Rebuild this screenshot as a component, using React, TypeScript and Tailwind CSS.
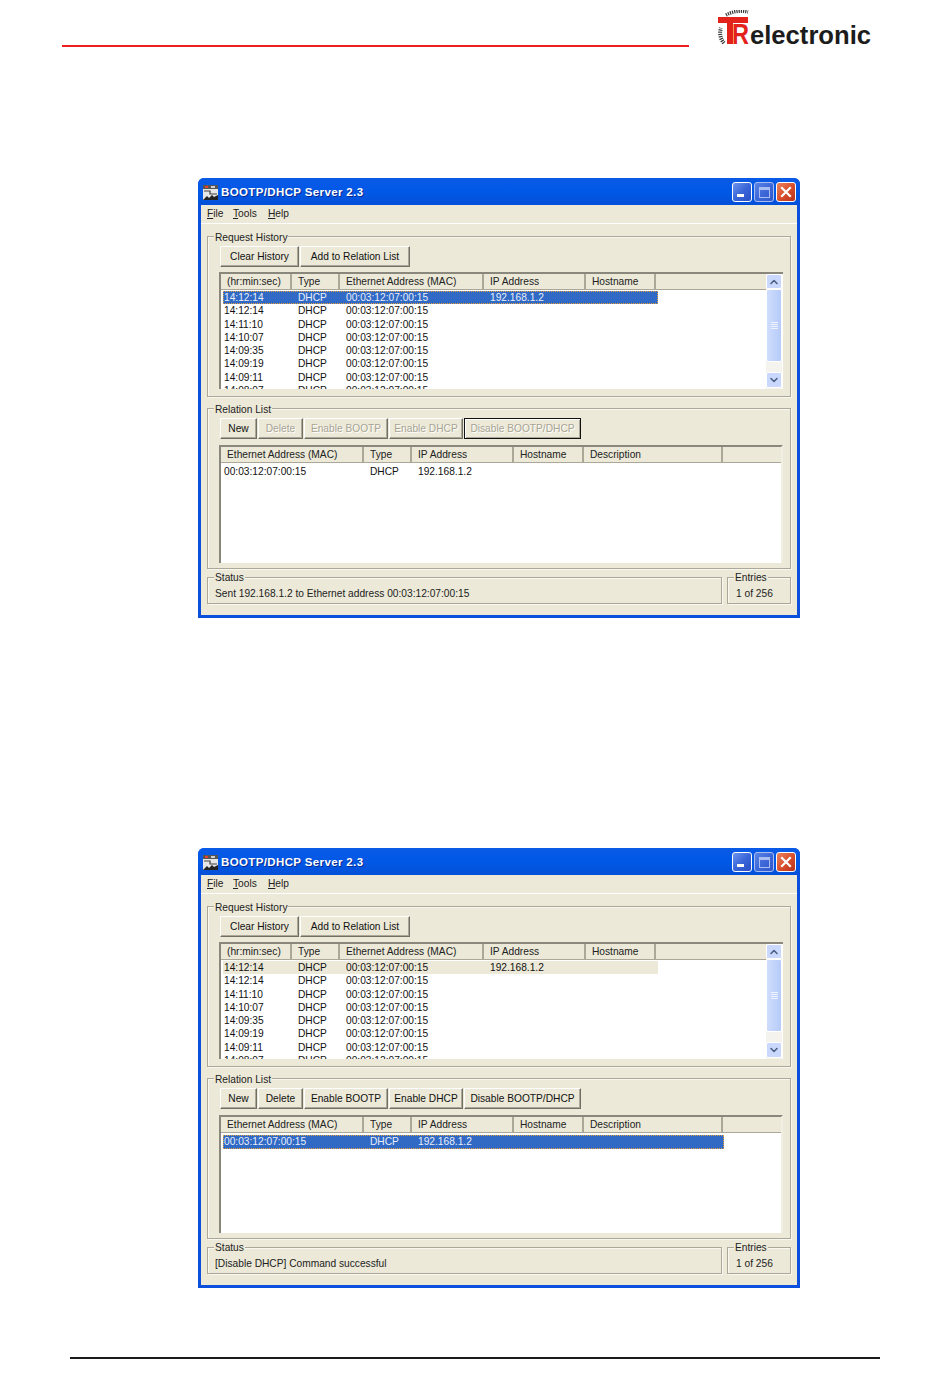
import { ChevronUp, ChevronDown } from "lucide-react";

const historyCols = [
  { label: "(hr:min:sec)", w: "w-[71px]" },
  { label: "Type", w: "w-[48px]" },
  { label: "Ethernet Address (MAC)", w: "w-[144px]" },
  { label: "IP Address", w: "w-[102px]" },
  { label: "Hostname", w: "w-[70px]" },
];

const relationCols = [
  { label: "Ethernet Address (MAC)", w: "w-[143px]" },
  { label: "Type", w: "w-[48px]" },
  { label: "IP Address", w: "w-[102px]" },
  { label: "Hostname", w: "w-[70px]" },
  { label: "Description", w: "w-[139px]" },
];

const times = ["14:12:14", "14:12:14", "14:11:10", "14:10:07", "14:09:35", "14:09:19", "14:09:11", "14:08:07"];

function TitleButton({ kind }: { kind: "min" | "max" | "close" }) {
  if (kind === "close") {
    return (
      <div className="w-[20px] h-[20px] rounded-[3px] border border-white bg-gradient-to-br from-[#e8825f] via-[#d9502c] to-[#b8321a] flex items-center justify-center">
        <svg width="12" height="12" viewBox="0 0 12 12">
          <path d="M2 2 L10 10 M10 2 L2 10" stroke="#fff" strokeWidth="2.2" strokeLinecap="square" />
        </svg>
      </div>
    );
  }
  if (kind === "min") {
    return (
      <div className="w-[20px] h-[20px] rounded-[3px] border border-white bg-gradient-to-br from-[#6f94ee] via-[#3a66d8] to-[#2a4fc4] flex items-end pl-[4px] pb-[4px]">
        <div className="w-[7px] h-[3px] bg-white" />
      </div>
    );
  }
  return (
    <div className="w-[20px] h-[20px] rounded-[3px] border border-[#a9bdf0] bg-gradient-to-br from-[#5b82e4] via-[#3d68d8] to-[#3058cc] flex items-center justify-center">
      <div className="w-[11px] h-[11px] border border-[#a9bdf0] border-t-[3px]" />
    </div>
  );
}

function AppIcon() {
  return (
    <svg width="15" height="15" viewBox="0 0 15 15" className="shrink-0">
      <rect x="0" y="0" width="15" height="15" fill="#e6e6e6" />
      <rect x="0" y="0" width="15" height="4" fill="#555" />
      <rect x="2" y="1" width="3" height="2" fill="#e04030" />
      <rect x="8" y="1" width="4" height="2" fill="#d0d0d0" />
      <path d="M1 6 H7 V9 H14" stroke="#404040" strokeWidth="1.2" fill="none" />
      <path d="M0 15 L4 11 L6 13 L9 10 L11 12 L15 10 V15 Z" fill="#222" />
    </svg>
  );
}

function Btn({ label, w, disabled, isDefault }: { label: string; w: string; disabled?: boolean; isDefault?: boolean }) {
  return (
    <div
      className={`${w} h-[21px] flex items-center justify-center bg-[#ece9d8] border ${
        isDefault
          ? "border-[#111] shadow-[inset_1px_1px_0_#fff,inset_-1px_-1px_0_#aca899]"
          : "border-t-white border-l-white border-r-[#716f64] border-b-[#716f64] shadow-[inset_-1px_-1px_0_#aca899]"
      } ${disabled ? "text-[#a7a493] [text-shadow:1px_1px_0_#fff]" : "text-[#111]"}`}
    >
      {label}
    </div>
  );
}

function Group({
  title,
  className,
  titleTop = "-top-[5px]",
  children,
}: {
  title: string;
  className: string;
  titleTop?: string;
  children: React.ReactNode;
}) {
  return (
    <div className={`relative border border-[#aca899] shadow-[1px_1px_0_#f8f7f0,inset_1px_1px_0_#f8f7f0] ${className}`}>
      <span className={`absolute left-[6px] ${titleTop} bg-[#ece9d8] pl-[1px] pr-[1px] leading-[12px] text-[#222]`}>{title}</span>
      {children}
    </div>
  );
}

function HeaderRow({ cols }: { cols: { label: string; w: string }[] }) {
  return (
    <div className="flex h-[16px] shrink-0 bg-[#ece9d8] shadow-[inset_0_-1px_0_#aca899]">
      {cols.map((c) => (
        <div
          key={c.label}
          className={`${c.w} shrink-0 pl-[6px] leading-[15px] text-[#222] border-r-2 border-r-[#aca899] whitespace-nowrap`}
        >
          {c.label}
        </div>
      ))}
      <div className="flex-1" />
    </div>
  );
}

function DataRow({
  cells,
  widths,
  state,
  rowClass,
}: {
  cells: string[];
  widths: string[];
  state?: "active" | "inactive";
  rowClass: string;
}) {
  const stateClass =
    state === "active"
      ? "bg-[#316ac5] text-[#e8eefa] border border-dotted border-[#e8a13c]"
      : state === "inactive"
        ? "bg-[#ece9d8] text-[#111] border border-transparent"
        : "text-[#111] border border-transparent";
  return (
    <div className={`flex ${rowClass} shrink-0 items-center ${stateClass}`}>
      {cells.map((c, i) => (
        <div key={i} className={`${widths[i]} shrink-0 whitespace-nowrap`}>
          {c}
        </div>
      ))}
    </div>
  );
}

function Scrollbar() {
  return (
    <div className="w-[16px] shrink-0 h-full bg-[#f4f3ee] flex flex-col mr-[1px]">
      <div className="h-[15px] shrink-0 rounded-[2px] bg-[#c9d8fc] border border-white flex items-center justify-center">
        <ChevronUp size={12} strokeWidth={3.2} color="#4d6185" />
      </div>
      <div className="h-[73px] shrink-0 rounded-[2px] bg-gradient-to-r from-[#cfdcfc] via-[#c3d4fb] to-[#b6cbf8] border border-white flex flex-col items-center justify-center gap-[1px]">
        <div className="w-[7px] h-[1px] bg-[#eef3fe]" />
        <div className="w-[7px] h-[1px] bg-[#eef3fe]" />
        <div className="w-[7px] h-[1px] bg-[#eef3fe]" />
        <div className="w-[7px] h-[1px] bg-[#eef3fe]" />
      </div>
      <div className="flex-1" />
      <div className="h-[16px] shrink-0 rounded-[2px] bg-[#c9d8fc] border border-white flex items-center justify-center mb-[1px]">
        <ChevronDown size={12} strokeWidth={3.2} color="#4d6185" />
      </div>
    </div>
  );
}

function XpWindow({
  firstRow,
  relationRow,
  disabled,
  status,
  className,
}: {
  firstRow: "active" | "inactive";
  relationRow?: "active";
  disabled: boolean;
  status: string;
  className: string;
}) {
  return (
    <div className={`w-[602px] h-[440px] shrink-0 ml-[198px] rounded-t-[6px] bg-[#0a50dc] flex flex-col text-[10.2px] ${className}`}>
      {/* Title bar */}
      <div className="h-[27px] shrink-0 rounded-t-[6px] bg-gradient-to-b from-[#0a5ae6] via-[#0058e6] to-[#0450d8] flex items-center pl-[5px] pr-[4px] pt-[1px]">
        <AppIcon />
        <span className="ml-[3px] mt-[2px] text-white font-bold text-[11.5px] tracking-[0.37px] [text-shadow:1px_1px_0_#0a2a90]">
          BOOTP/DHCP Server 2.3
        </span>
        <div className="ml-auto flex gap-[2px]">
          <TitleButton kind="min" />
          <TitleButton kind="max" />
          <TitleButton kind="close" />
        </div>
      </div>

      {/* Client area */}
      <div className="flex-1 mx-[3px] mb-[3px] bg-[#ece9d8] flex flex-col">
        <div className="h-[19px] shrink-0 border-b border-white flex items-center text-[#222] pl-[6px]">
          <span className="w-[26px]"><u>F</u>ile</span>
          <span className="w-[35px]"><u>T</u>ools</span>
          <span><u>H</u>elp</span>
        </div>

        <Group title="Request History" className="ml-[6px] mr-[6px] mt-[12px] h-[161px] shrink-0 pt-[9px] pl-[11px]">
          <div className="flex gap-[1px] ml-[1px]">
            <Btn label="Clear History" w="w-[79px]" />
            <Btn label="Add to Relation List" w="w-[110px]" />
          </div>
          <div className="mt-[5px] w-[564px] h-[117px] flex bg-white border-l-2 border-t-2 border-l-[#8a887c] border-t-[#8a887c] overflow-hidden">
            <div className="flex-1 flex flex-col overflow-hidden">
              <HeaderRow cols={historyCols} />
              <div className="pl-[2px] pt-[1px] w-[437px]">
                {times.map((t, i) => (
                  <DataRow
                    key={i}
                    cells={[t, "DHCP", "00:03:12:07:00:15", i === 0 ? "192.168.1.2" : ""]}
                    widths={["w-[74px]", "w-[48px]", "w-[144px]", "w-[100px]"]}
                    state={i === 0 ? firstRow : undefined}
                    rowClass="h-[13.3px]"
                  />
                ))}
              </div>
            </div>
            <Scrollbar />
          </div>
        </Group>

        <Group title="Relation List" className="ml-[6px] mr-[6px] mt-[11px] h-[161px] shrink-0 pt-[9px] pl-[11px]">
          <div className="flex gap-[1px] ml-[1px]">
            <Btn label="New" w="w-[37px]" />
            <Btn label="Delete" w="w-[45px]" disabled={disabled} />
            <Btn label="Enable BOOTP" w="w-[84px]" disabled={disabled} />
            <Btn label="Enable DHCP" w="w-[74px]" disabled={disabled} />
            <Btn label="Disable BOOTP/DHCP" w="w-[117px]" disabled={disabled} isDefault={disabled} />
          </div>
          <div className="mt-[6px] w-[564px] h-[118px] flex flex-col bg-white border-l-2 border-t-2 border-l-[#8a887c] border-t-[#8a887c] border-r-2 border-r-[#f1efe2] overflow-hidden">
            <HeaderRow cols={relationCols} />
            <div className="pl-[2px] pt-[2px] w-[503px]">
              <DataRow
                cells={["00:03:12:07:00:15", "DHCP", "192.168.1.2"]}
                widths={["w-[146px]", "w-[48px]", "w-[102px]"]}
                state={relationRow}
                rowClass="h-[14px]"
              />
            </div>
          </div>
        </Group>

        <div className="flex ml-[6px] mt-[8px] gap-[5px]">
          <Group title="Status" titleTop="-top-[6px]" className="w-[515px] h-[27px] pl-[7px] pt-[10px]">
            <div className="leading-[12px] text-[#222] whitespace-nowrap">{status}</div>
          </Group>
          <Group title="Entries" titleTop="-top-[6px]" className="w-[64px] h-[27px] pl-[8px] pt-[10px]">
            <div className="leading-[12px] text-[#222]">1 of 256</div>
          </Group>
        </div>
      </div>
    </div>
  );
}

function Logo() {
  const font = "'Liberation Sans', Arial, sans-serif";
  return (
    <svg width="156" height="36" viewBox="0 0 156 36" className="shrink-0">
      {/* encoder ring */}
      <path d="M6 33 A15 15 0 0 1 3 18" fill="none" stroke="#333" strokeWidth="4" strokeDasharray="1.2 1" />
      <path d="M8 5 A30 30 0 0 1 30 2" fill="none" stroke="#333" strokeWidth="3.5" strokeDasharray="1.2 1" />
      <rect x="0" y="7" width="30" height="6" fill="#e3231b" />
      <rect x="9" y="7" width="6" height="27" fill="#e3231b" />
      <text x="14" y="34" fontFamily={font} fontWeight="700" fontSize="30" fill="#e3231b" textLength="17" lengthAdjust="spacingAndGlyphs">
        R
      </text>
      <text x="32" y="34" fontFamily={font} fontWeight="700" fontSize="26" fill="#1c1c1c" textLength="121" lengthAdjust="spacingAndGlyphs">
        electronic
      </text>
    </svg>
  );
}

export default function App() {
  return (
    <div className="relative w-[950px] h-[1387px] bg-white flex flex-col overflow-hidden font-['Liberation_Sans',Arial,sans-serif]">
      <div className="h-[47px] shrink-0 flex items-end">
        <div className="ml-[62px] w-[627px] h-[2px] bg-[#f01f1f] shrink-0" />
        <div className="ml-[29px] mb-[1px]">
          <Logo />
        </div>
      </div>

      <XpWindow firstRow="active" disabled status="Sent 192.168.1.2 to Ethernet address 00:03:12:07:00:15" className="mt-[131px]" />
      <XpWindow firstRow="inactive" relationRow="active" disabled={false} status="[Disable DHCP] Command successful" className="mt-[230px]" />

      <div className="mt-[69px] ml-[70px] w-[810px] h-[2px] bg-[#1a1a1a] shrink-0" />
    </div>
  );
}
